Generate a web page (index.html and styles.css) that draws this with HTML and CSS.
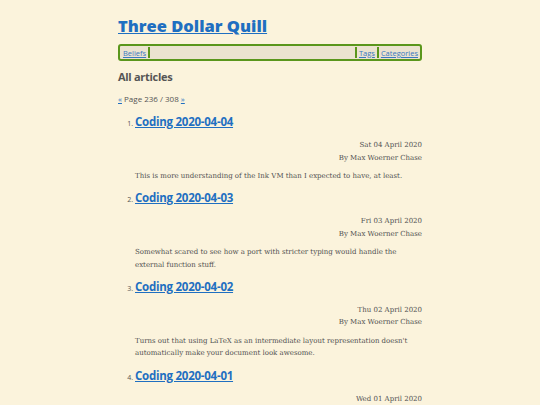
FILE: index.html
```html
<!DOCTYPE html>
<html>
<head>
<meta charset="utf-8">
<link rel="stylesheet" href="styles.css">
</head>
<body>
<div class="page">
  <h1 class="site-title"><a href="#">Three Dollar Quill</a></h1>
  <nav class="nav">
    <a href="#">Beliefs</a>
    <span class="sep"></span>
    <span class="spacer"></span>
    <span class="sep"></span>
    <a href="#">Tags</a>
    <span class="sep"></span>
    <a href="#">Categories</a>
  </nav>
  <h2 class="section-title">All articles</h2>
  <p class="pager"><a href="#">«</a> Page 236 / 308 <a href="#">»</a></p>
  <ol class="articles">
    <li>
      <h3 class="art-title"><a href="#">Coding 2020-04-04</a></h3>
      <div class="meta">Sat 04 April 2020<br>By Max Woerner Chase</div>
      <p class="summary">This is more understanding of the Ink VM than I expected to have, at least.</p>
    </li>
    <li>
      <h3 class="art-title"><a href="#">Coding 2020-04-03</a></h3>
      <div class="meta">Fri 03 April 2020<br>By Max Woerner Chase</div>
      <p class="summary">Somewhat scared to see how a port with stricter typing would handle the external function stuff.</p>
    </li>
    <li>
      <h3 class="art-title"><a href="#">Coding 2020-04-02</a></h3>
      <div class="meta">Thu 02 April 2020<br>By Max Woerner Chase</div>
      <p class="summary">Turns out that using LaTeX as an intermediate layout representation doesn't automatically make your document look awesome.</p>
    </li>
    <li>
      <h3 class="art-title"><a href="#">Coding 2020-04-01</a></h3>
      <div class="meta">Wed 01 April 2020<br>By Max Woerner Chase</div>
      <p class="summary">More work on the layout.</p>
    </li>
  </ol>
</div>
</body>
</html>
```

FILE: styles.css
```css
html, body {
  margin: 0;
  padding: 0;
  background: #fbf3dc;
}
body {
  font-family: "DejaVu Serif", serif;
  color: #555;
  font-size: 7px;
}
.page {
  width: 304px;
  margin: 0 auto;
  padding-top: 14px;
}
a {
  color: #1f6fc1;
}
.site-title {
  font-family: "Open Sans", sans-serif;
  font-weight: 800;
  font-size: 16.5px;
  line-height: 24px;
  margin: 0 0 6px 0;
}
.nav {
  display: flex;
  align-items: center;
  height: 13px;
  border: 2px solid #5a961c;
  border-radius: 3px;
  background: #ebe3d0;
  font-family: "Open Sans", sans-serif;
  font-size: 7.5px;
  padding: 0 1px 0 2px;
}
.nav a {
  color: #3a78c0;
  padding: 0 1px;
}
.nav .sep {
  width: 2px;
  height: 11px;
  background: #5a961c;
  margin: 0 1px;
}
.nav .spacer {
  flex: 1;
}
.section-title {
  font-family: "Open Sans", sans-serif;
  font-weight: 700;
  font-size: 11px;
  letter-spacing: -0.3px;
  color: #555;
  margin: 8px 0 0 0;
  line-height: 16px;
}
.pager {
  font-family: "Open Sans", sans-serif;
  font-size: 8px;
  color: #555;
  margin: 8px 0 0 0;
  line-height: 12px;
}
.articles {
  margin: 8px 0 0 0;
  padding-left: 17px;
  font-family: "Open Sans", sans-serif;
  font-size: 7px;
  color: #555;
}
.articles li {
  margin: 0;
}
.art-title {
  font-family: "Open Sans", sans-serif;
  font-weight: 700;
  font-size: 11.5px;
  letter-spacing: -0.25px;
  line-height: 18px;
  margin: 0;
}
.meta {
  font-family: "DejaVu Serif", serif;
  font-size: 7px;
  line-height: 12.5px;
  text-align: right;
  margin-top: 8px;
  color: #505050;
}
.summary {
  font-family: "DejaVu Serif", serif;
  font-size: 7px;
  line-height: 12.5px;
  color: #505050;
  margin: 6px 0 6.7px 0;
}
```
